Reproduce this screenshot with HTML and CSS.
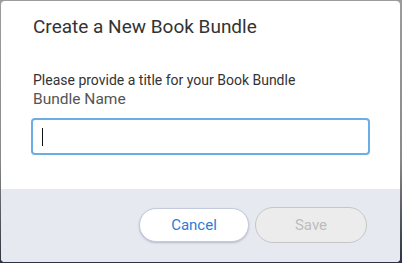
FILE: index.html
```html
<!DOCTYPE html>
<html>
<head>
<meta charset="utf-8">
<link rel="stylesheet" href="styles.css">
</head>
<body>
<div class="dialog">
  <div class="content">
    <h1 class="title">Create a New Book Bundle</h1>
    <p class="hint">Please provide a title for your Book Bundle</p>
    <label class="label">Bundle Name</label>
    <div class="input"><span class="caret"></span></div>
  </div>
  <div class="footer">
    <button class="btn cancel">Cancel</button>
    <button class="btn save">Save</button>
  </div>
</div>
</body>
</html>
```

FILE: styles.css
```css
html, body {
  margin: 0;
  padding: 0;
  width: 402px;
  height: 263px;
  overflow: hidden;
}
body {
  background: linear-gradient(to bottom, #9c9c9c 0%, #8a8a8a 60%, #2c3440 100%);
  font-family: Roboto, "Liberation Sans", sans-serif;
  padding: 1px 0 0 1px;
  box-sizing: border-box;
}
.dialog {
  width: 399px;
  height: 261px;
  background: #fff;
  border-radius: 4px;
  overflow: hidden;
  display: flex;
  flex-direction: column;
}
.content {
  padding: 0 29px 0 30px;
  height: 188px;
  box-sizing: border-box;
}
.title {
  margin: 0;
  padding-top: 14px;
  font-size: 19px;
  font-weight: 400;
  color: #333;
  line-height: 24px;
  padding-left: 2px;
}
.hint {
  margin: 33px 0 0 2px;
  font-size: 14px;
  line-height: 16px;
  color: #333;
}
.label {
  display: block;
  font-size: 15.5px;
  line-height: 18px;
  color: #555;
  margin: 2px 0 0 2px;
}
.input {
  margin-top: 10px;
  width: 339px;
  height: 37px;
  box-sizing: border-box;
  border: 2px solid #6aaee8;
  border-radius: 4px;
  display: flex;
  align-items: center;
  padding-left: 9px;
}
.caret {
  width: 1px;
  height: 18px;
  background: #111;
}
.footer {
  flex: 1;
  background: #e6e9f0;
  display: flex;
  justify-content: flex-end;
  align-items: center;
  gap: 6px;
  padding: 0 33px 1px 0;
}
.btn {
  font-family: Roboto, "Liberation Sans", sans-serif;
  font-size: 15px;
  border-radius: 18px;
  cursor: pointer;
}
.cancel {
  width: 110px;
  height: 34px;
  background: #fff;
  color: #2b7bd9;
  border: 1px solid #c3cadb;
  box-shadow: 0 1px 2px rgba(120,130,160,0.45);
}
.save {
  width: 112px;
  height: 36px;
  background: #ececec;
  color: #bcbcbc;
  border: 1px solid #c6c6c6;
}
```
